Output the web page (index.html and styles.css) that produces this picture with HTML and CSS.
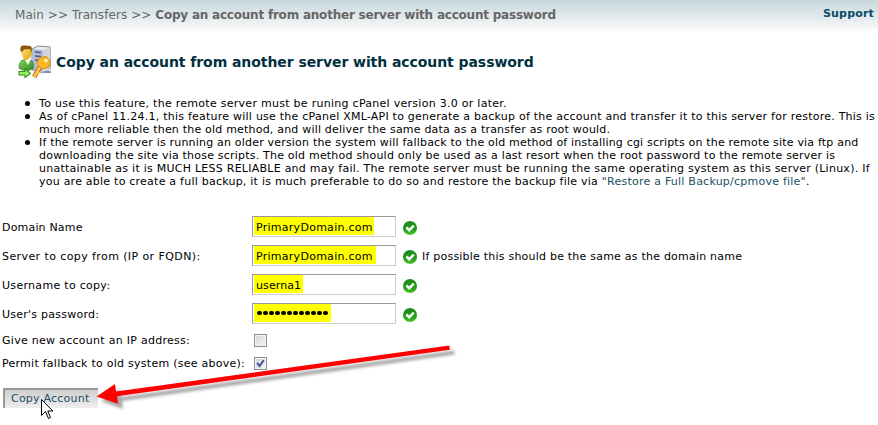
FILE: index.html
```
<!DOCTYPE html>
<html lang="en">
<head>
<meta charset="utf-8">
<title>Copy an account</title>
<link rel="stylesheet" href="styles.css">
</head>
<body>
<svg width="0" height="0" class="defs" aria-hidden="true">
  <defs>
    <linearGradient id="green" x1="0" y1="0" x2="0" y2="1"><stop offset="0" stop-color="#1c8a1c"/><stop offset=".6" stop-color="#219a1b"/><stop offset="1" stop-color="#4fc72c"/></linearGradient>
    <symbol id="ok" viewBox="0 0 14 14"><circle cx="7" cy="7" r="7" fill="url(#green)"/><path d="M3.400 6.500 6.200 9.200 10.800 4.600" fill="none" stroke="#fff" stroke-width="2.5"/></symbol>
  </defs>
</svg>
<header class="topbar">
  <nav class="crumbs"><span class="c1">Main &gt;&gt; Transfers &gt;&gt; </span><b class="c2">Copy an account from another server with account password</b></nav>
  <a class="support">Support</a>
</header>
<main>
  <div class="heading">
    <svg class="logo" width="34" height="34" viewBox="0 0 34 34">
      <defs>
        <linearGradient id="skin" x1="0" y1="0" x2="1" y2="1"><stop offset="0" stop-color="#ffe48a"/><stop offset="1" stop-color="#e4a600"/></linearGradient>
        <linearGradient id="body" x1="0" y1="0" x2="1" y2="1"><stop offset="0" stop-color="#8ad45e"/><stop offset="1" stop-color="#2f8a20"/></linearGradient>
      </defs>
      <path d="M14 4 20 1 32.500 2 32.500 24 25 28 14 25z" fill="#eceef2" stroke="#7f8490" stroke-width="1"/>
      <path d="M14 4 25 5 25 28 14 25z" fill="#b4bbd0"/>
      <path d="M25 5 32.500 2V24L25 28z" fill="#d3d5db"/>
      <path d="M17 7 23 7.500M17 11 23 11.500M17 15 23 15.500" stroke="#4c5b90" stroke-width="1.400"/>
      <path d="M1 23C1 17 4 14 8 15L11 18 13 15C16 17 16 21 15 24 11 26 4 26 1 23z" fill="url(#body)" stroke="#39852c" stroke-width=".8"/>
      <path d="M7 15 10 20 12.500 15z" fill="#f4fff0"/>
      <path d="M3 5C3 0 14-1 14 6 14 11 11 15 8 15 5 14 3 10 3 5z" fill="url(#skin)"/>
      <path d="M2.500 6C1.500 0 5 0 9 .8 14 .5 15 3 13 8L12 4 6 4.500 4 7z" fill="#8b5711"/>
      <path d="M26 27H33" stroke="#8292a8" stroke-width="2"/>
      <path d="M1 26.500H7V23.500L12.500 28.500 7 32.500V30H1z" fill="#a5ec6b" stroke="#28951b" stroke-width="1.1"/>
      <path d="M22 22 16 32" stroke="#b96b10" stroke-width="4.4"/>
      <path d="M22 22 16 32M19 27 21.500 28.500" stroke="#ffc347" stroke-width="2.6"/>
      <path d="M21 13 28 11.500 32 16 31 22 24 24 19 19z" fill="#ffb81f" stroke="#dc8b0b" stroke-width="1" stroke-linejoin="round"/>
      <circle cx="28" cy="15.500" r="1.700" fill="#fff5cb"/>
    </svg>
    <h1>Copy an account from another server with account password</h1>
  </div>
  <ul class="notes">
    <li><span class="l1">To use this feature, the remote server must be runing cPanel version 3.0 or later.</span></li>
    <li><span class="l2">As of cPanel 11.24.1, this feature will use the cPanel XML-API to generate a backup of the account and transfer it to this server for restore. This is</span><br>
      <span class="l3">much more reliable then the old method, and will deliver the same data as a transfer as root would.</span></li>
    <li><span class="l4">If the remote server is running an older version the system will fallback to the old method of installing cgi scripts on the remote site via ftp and</span><br>
      <span class="l5">downloading the site via those scripts. The old method should only be used as a last resort when the root password to the remote server is</span><br>
      <span class="l6">unattainable as it is MUCH LESS RELIABLE and may fail. The remote server must be running the same operating system as this server (Linux). If</span><br>
      <span class="l7">you are able to create a full backup, it is much preferable to do so and restore the backup file via <a>"Restore a Full Backup/cpmove file"</a>.</span></li>
  </ul>
  <form class="fields">
    <div class="row"><label class="f1">Domain Name</label><div class="box"><span class="mark m1">PrimaryDomain.com</span></div><svg class="ok"><use href="#ok"/></svg></div>
    <div class="row"><label class="f2">Server to copy from (IP or FQDN):</label><div class="box"><span class="mark m2">PrimaryDomain.com</span></div><svg class="ok"><use href="#ok"/></svg><span class="hint">If possible this should be the same as the domain name</span></div>
    <div class="row"><label class="f3">Username to copy:</label><div class="box"><span class="mark m3">userna1</span></div><svg class="ok"><use href="#ok"/></svg></div>
    <div class="row"><label class="f4">User's password:</label><div class="box"><span class="mark m4"><i></i><i></i><i></i><i></i><i></i><i></i><i></i><i></i><i></i><i></i><i></i><i></i></span></div><svg class="ok"><use href="#ok"/></svg></div>
    <div class="options">
      <div class="row short"><label class="f5">Give new account an IP address:</label><span class="check"></span></div>
      <div class="row short"><label class="f6">Permit fallback to old system (see above):</label><span class="check"><svg width="9" height="9" viewBox="0 0 9 9"><path d="M1.200 3.800 3.600 7 7.800 1" fill="none" stroke="#3f5794" stroke-width="2"/></svg></span></div>
    </div>
    <div class="button"><span>Copy Account</span></div>
  </form>
</main>
<svg class="arrow" width="375" height="80" viewBox="90 340 375 80">
  <defs><filter id="soft" x="-10%" y="-50%" width="120%" height="200%"><feGaussianBlur stdDeviation="1.600"/></filter></defs>
  <path d="M449 345.500 449.600 349.500 117 396 118 404 96 396 115 384 116 392z" transform="translate(5 5)" fill="#777" opacity=".65" filter="url(#soft)"/>
  <path d="M449.300 345.500 449.900 349.800 117 396.200 118 403.800 96.500 396.500 115 384 116 391.600z" fill="#f00"/>
</svg>
<svg class="cursor" width="13" height="21" viewBox="0 0 13 21"><path d="M.5.5V16.500L4.500 12.500 7.500 19.500 9.500 18.500 6.800 12H11.800z" fill="#fff" stroke="#000"/></svg>
</body>
</html>
```
FILE: styles.css
```
* { box-sizing: border-box; }
body { margin: 0; width: 878px; height: 425px; position: relative; overflow: hidden; background: #fff; color: #000; font: 11px/13px "DejaVu Sans", Verdana, sans-serif; white-space: nowrap; }
.defs { position: absolute; }
.topbar { height: 30px; display: flex; justify-content: space-between; padding: 0 4px 0 15px; background: linear-gradient(#c6d7dc, #f9f9f9); color: #666; }
.crumbs { font-size: 12px; line-height: 31px; white-space: pre; }
.c1 { letter-spacing: .08px; }
.c2 { letter-spacing: -.215px; }
.support { color: #0b4a68; font-weight: bold; line-height: 28px; letter-spacing: .18px; }
.heading { height: 55px; display: flex; padding: 15px 0 0 18px; }
.logo { margin-right: 4px; }
h1 { margin: 0; font-size: 14px; line-height: 34px; color: #03303f; letter-spacing: -.07px; }
.notes { margin: 12px 0 0; padding: 0; list-style: none; }
.notes li { padding-left: 39px; position: relative; }
.notes li::before { content: ""; position: absolute; left: 25px; top: 4px; width: 5px; height: 5px; border-radius: 50%; background: #000; }
.notes a { color: #1b4f66; }
.l1 { letter-spacing: .275px; }
.l2 { letter-spacing: .235px; }
.l3 { letter-spacing: .2px; }
.l4 { letter-spacing: .195px; }
.l5 { letter-spacing: .207px; }
.l6 { letter-spacing: .25px; }
.l7 { letter-spacing: .234px; }
.fields { margin-top: 24px; }
.row { height: 29px; display: flex; align-items: center; }
.row label { width: 252px; padding: 1px 0 0 2px; }
.options { padding-top: 1px; }
.row.short { height: 23px; }
.row.short label { padding-top: 0; }
.f1 { letter-spacing: .18px; }
.f2 { letter-spacing: .41px; }
.f3 { letter-spacing: .3px; }
.f4 { letter-spacing: .25px; }
.f5 { letter-spacing: .28px; }
.f6 { letter-spacing: .26px; }
.box { width: 144px; height: 21px; border: 1px solid #ccc; border-top-color: #999; border-left-color: #999; padding-left: 1px; display: flex; }
.mark { background: #ff0; height: 18px; line-height: 22px; padding-left: 2px; }
.m1 { width: 120px; letter-spacing: .27px; }
.m2 { width: 122px; letter-spacing: .27px; }
.m3 { width: 49px; letter-spacing: .1px; }
.m4 { width: 77px; display: flex; align-items: center; gap: 1.1px; padding-left: 3px; }
.m4 i { width: 4.9px; height: 4.9px; border-radius: 50%; background: #000; }
.ok { width: 14px; height: 14px; margin: 3px 5px 0 7px; }
.hint { letter-spacing: .22px; padding-top: 1px; }
.check { width: 13px; height: 13px; margin-left: 2px; border: 1px solid #8e8f8f; background: linear-gradient(135deg, #cfd3d8, #f6f6f6); box-shadow: inset 0 0 0 1px #f4f4f4; display: flex; align-items: center; justify-content: center; }
.button { width: 95px; height: 20px; margin: 13px 0 0 3px; border: solid #999; border-width: 2px 0 0 2px; background: linear-gradient(#cfcfcf, #eee); color: #1b4f66; padding-left: 6px; line-height: 17px; letter-spacing: .22px; }
.arrow { position: absolute; left: 90px; top: 340px; }
.cursor { position: absolute; left: 41px; top: 399px; }
```
